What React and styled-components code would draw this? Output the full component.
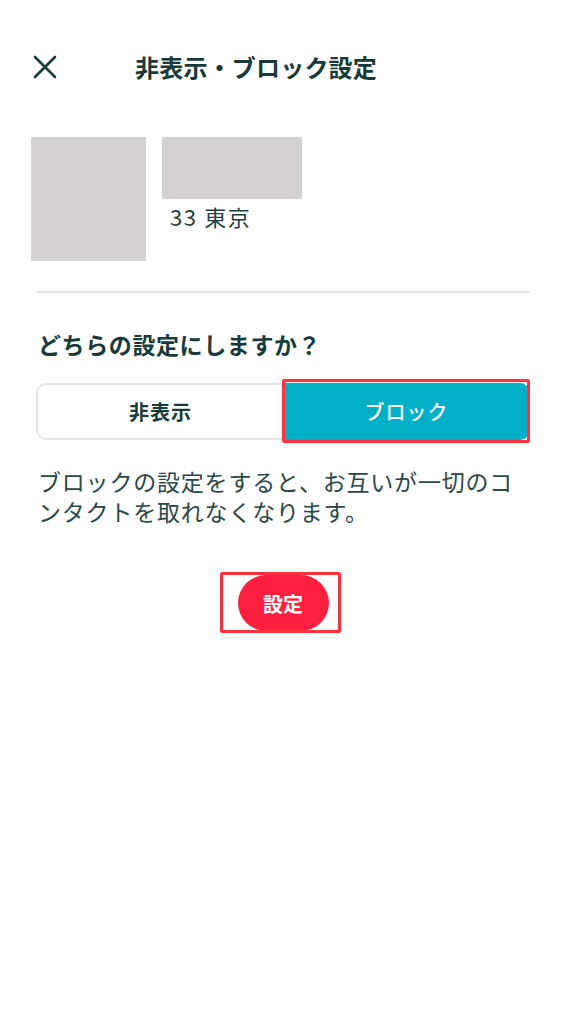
import { useState } from 'react'
import styled, { createGlobalStyle } from 'styled-components'

const GlobalStyle = createGlobalStyle`
    body{
        margin:0;
        background:#fff;
        font-family:"Noto Sans CJK JP","Noto Sans",sans-serif;
        color:#173b3b;
    }
`

function App() {
    const [mode, setMode] = useState('block')

    return (
        <Page>
            <GlobalStyle />
            <Header>
                <CloseButton aria-label="close">
                    <svg width="24" height="24" viewBox="0 0 24 24">
                        <path d="M2 2L22 22M22 2L2 22" stroke="#173b3b" strokeWidth="2.6" strokeLinecap="round" />
                    </svg>
                </CloseButton>
                <Title>非表示・ブロック設定</Title>
            </Header>

            <Profile>
                <Avatar />
                <Info>
                    <NameBox />
                    <Meta>33 東京</Meta>
                </Info>
            </Profile>

            <Content>
                <Divider />
                <Question>どちらの設定にしますか？</Question>

                <Segmented>
                    <Segment $active={mode === 'hide'} onClick={() => setMode('hide')}>非表示</Segment>
                    <Segment $active={mode === 'block'} $right onClick={() => setMode('block')}>
                        ブロック
                        <Highlight $top={-4} $right={0} $bottom={-3} $left={-1} />
                    </Segment>
                </Segmented>

                <Description>ブロックの設定をすると、お互いが一切のコンタクトを取れなくなります。</Description>

                <Actions>
                    <SubmitButton>
                        設定
                        <Highlight $top={-3} $right={-12} $bottom={-2} $left={-18} />
                    </SubmitButton>
                </Actions>
            </Content>
        </Page>
    )
}

export default App

const Page = styled.div`
    width:576px;
    min-height:1024px;
    background:#fff;
`

const Header = styled.div`
    display:flex;
    align-items:center;
    height:40px;
    padding:47px 0 0 32px;
`

const CloseButton = styled.button`
    width:26px;
    height:26px;
    padding:0;
    border:none;
    background:none;
    display:flex;
    align-items:center;
    justify-content:center;
    cursor:pointer;
`

const Title = styled.h1`
    margin:0 0 0 77px;
    font-size:24px;
    font-weight:700;
    line-height:40px;
    letter-spacing:0.2px;
    color:#173b3b;
`

const Profile = styled.div`
    display:flex;
    gap:16px;
    padding:50px 0 0 31px;
`

const Avatar = styled.div`
    width:115px;
    height:124px;
    background:#d6d1d1;
`

const Info = styled.div`
    display:flex;
    flex-direction:column;
`

const NameBox = styled.div`
    width:140px;
    height:62px;
    background:#d6d1d1;
`

const Meta = styled.div`
    margin:2px 0 0 8px;
    font-size:22px;
    line-height:30px;
    letter-spacing:1.6px;
    color:#1f4040;
`

const Content = styled.div`
    padding:0 46px 0 36px;
`

const Divider = styled.hr`
    margin:30px 0 0;
    border:none;
    height:2px;
    background:#e6e9e9;
`

const Question = styled.h2`
    margin:35px 0 0 2px;
    font-size:23px;
    font-weight:700;
    line-height:32px;
    letter-spacing:0.6px;
    color:#173b3b;
`

const Segmented = styled.div`
    display:grid;
    grid-template-columns:1fr 1fr;
    height:57px;
    margin-top:23px;
    border:2px solid #e3e6e6;
    border-radius:10px;
    box-sizing:border-box;
`

const Segment = styled.button`
    position:relative;
    margin:${p => p.$right ? '-2px -2px -2px 0' : '0'};
    border:none;
    border-radius:${p => p.$right ? '0 10px 10px 0' : '8px 0 0 8px'};
    background:${p => p.$active ? '#00b0c6' : '#fff'};
    color:${p => p.$active ? '#fff' : '#173b3b'};
    font-family:inherit;
    font-size:20px;
    font-weight:${p => p.$active ? 500 : 700};
    letter-spacing:1px;
    cursor:pointer;
`

const Highlight = styled.span`
    position:absolute;
    top:${p => p.$top}px;
    right:${p => p.$right}px;
    bottom:${p => p.$bottom}px;
    left:${p => p.$left}px;
    border:3px solid #ff3340;
    border-radius:2px;
    pointer-events:none;
`

const Description = styled.p`
    margin:26px 0 0 2px;
    font-size:23px;
    line-height:30px;
    letter-spacing:0.8px;
    color:#2a4848;
`

const Actions = styled.div`
    display:flex;
    justify-content:center;
    margin-top:49px;
`

const SubmitButton = styled.button`
    position:relative;
    width:91px;
    height:56px;
    border:none;
    border-radius:28px;
    background:#ff2040;
    color:#fff;
    font-family:inherit;
    font-size:20px;
    font-weight:700;
    cursor:pointer;
`
